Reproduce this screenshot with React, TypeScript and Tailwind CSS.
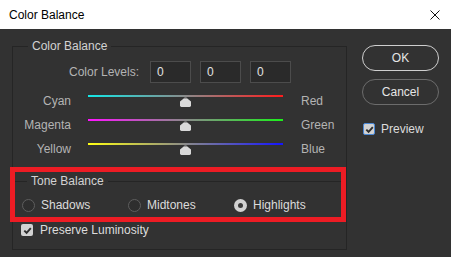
import React from "react";

const Check = () => (
  <svg width="9" height="9" viewBox="0 0 9 9" className="block">
    <path d="M1.3 4.6 L3.6 6.8 L7.8 2.2" fill="none" stroke="#2e2e2e" strokeWidth="1.9" />
  </svg>
);

const Thumb = () => (
  <svg width="11" height="10" viewBox="0 0 11 10" className="block">
    <path d="M5.5 0 L11 4.6 V8.6 Q11 10 9.6 10 H1.4 Q0 10 0 8.6 V4.6 Z" fill="#d9d9d9" />
    <path d="M5.5 0 L7.2 1.4 H3.8 Z" fill="#5a5a5a" />
  </svg>
);

function SliderRow({ left, right, grad }: { left: string; right: string; grad: string }) {
  return (
    <div className="flex items-center h-[12px]">
      <div className="w-[58px] text-right text-[#b4b4b4] leading-[16px]">{left}</div>
      <div className="ml-[17px] w-[195px] h-[12px] flex flex-col items-center">
        <div className={`w-full h-[2px] ${grad}`} />
        <Thumb />
      </div>
      <div className="ml-[18px] text-[#b4b4b4] leading-[16px]">{right}</div>
    </div>
  );
}

function Radio({ label, checked }: { label: string; checked?: boolean }) {
  return (
    <div className="flex items-center h-[16px]">
      {checked ? (
        <div className="w-[13px] h-[13px] rounded-full bg-[#d2d2d2] flex items-center justify-center">
          <div className="w-[5px] h-[5px] rounded-full bg-[#3a3a3a]" />
        </div>
      ) : (
        <div className="w-[13px] h-[13px] rounded-full border border-[#5e5e5e] bg-[#2e2e2e]" />
      )}
      <span className="ml-[6px] text-[#dcdcdc]">{label}</span>
    </div>
  );
}

export default function App() {
  return (
    <div
      className="w-[451px] h-[257px] bg-[#323232] overflow-hidden text-[12px] leading-[16px]"
      style={{ fontFamily: '"Liberation Sans", Arial, sans-serif' }}
    >
      <div className="h-[29px] bg-white flex items-center justify-between pl-[9px] pr-[11px]">
        <span className="text-black">Color Balance</span>
        <svg width="10" height="10" viewBox="0 0 10 10" className="block">
          <path d="M0.5 0.5 L9.5 9.5 M9.5 0.5 L0.5 9.5" stroke="#111" strokeWidth="1" />
        </svg>
      </div>
      <div className="flex pl-[12px]">
        <fieldset className="mt-[9px] w-[335px] border border-[#252525] pb-[11px]">
          <legend className="ml-[15px] px-[4px] text-[#d2d2d2] leading-[16px]">Color Balance</legend>
          <div className="mt-[7px] flex items-center h-[22px]">
            <div className="w-[126px] text-right text-[#b4b4b4]">Color Levels:</div>
            <div className="ml-[11px] flex gap-[9px]">
              {[0, 1, 2].map((i) => (
                <div
                  key={i}
                  className="w-[41px] h-[22px] border border-[#4c4c4c] bg-[#2a2a2a] text-[#e2e2e2] pl-[6px] flex items-center"
                >
                  0
                </div>
              ))}
            </div>
          </div>
          <div className="mt-[12px] flex flex-col gap-[12px]">
            <SliderRow left="Cyan" right="Red" grad="bg-[linear-gradient(to_right,#14e8e8,#8a8a8a,#ff1c1c)]" />
            <SliderRow left="Magenta" right="Green" grad="bg-[linear-gradient(to_right,#ff14ff,#8a8a8a,#1cf01c)]" />
            <SliderRow left="Yellow" right="Blue" grad="bg-[linear-gradient(to_right,#ffff14,#8a8a8a,#1414ff)]" />
          </div>
          <div className="mt-[12px] -ml-[3px] border-[5px] border-[#ed1c24] pt-[1px] pb-[4px]">
            <fieldset className="border-t border-[#252525]">
              <legend className="ml-[12px] px-[4px] text-[#d2d2d2] leading-[16px]">Tone Balance</legend>
              <div className="mt-[8px] pl-[7px] grid grid-cols-[106px_106px_106px]">
                <Radio label="Shadows" />
                <Radio label="Midtones" />
                <Radio label="Highlights" checked />
              </div>
            </fieldset>
          </div>
          <div className="flex items-center h-[16px] pl-[8px]">
            <div className="w-[12px] h-[12px] rounded-[2px] bg-[#d2d2d2] flex items-center justify-center">
              <Check />
            </div>
            <span className="ml-[7px] text-[#dcdcdc]">Preserve Luminosity</span>
          </div>
        </fieldset>
        <div className="ml-[15px] mt-[16px] flex flex-col w-[77px]">
          <div className="h-[26px] rounded-full border-[1.5px] border-[#cfcfcf] flex items-center justify-center text-[#e6e6e6]">
            OK
          </div>
          <div className="mt-[8px] h-[26px] rounded-full border-[1.5px] border-[#6c6c6c] flex items-center justify-center text-[#e6e6e6]">
            Cancel
          </div>
          <div className="mt-[16px] flex items-center h-[16px] pl-[1px]">
            <div className="w-[12px] h-[12px] rounded-[2px] border-[1.5px] border-[#4a88d6] bg-[#d2d2d2] flex items-center justify-center">
              <Check />
            </div>
            <span className="ml-[6px] text-[#dcdcdc]">Preview</span>
          </div>
        </div>
      </div>
    </div>
  );
}
